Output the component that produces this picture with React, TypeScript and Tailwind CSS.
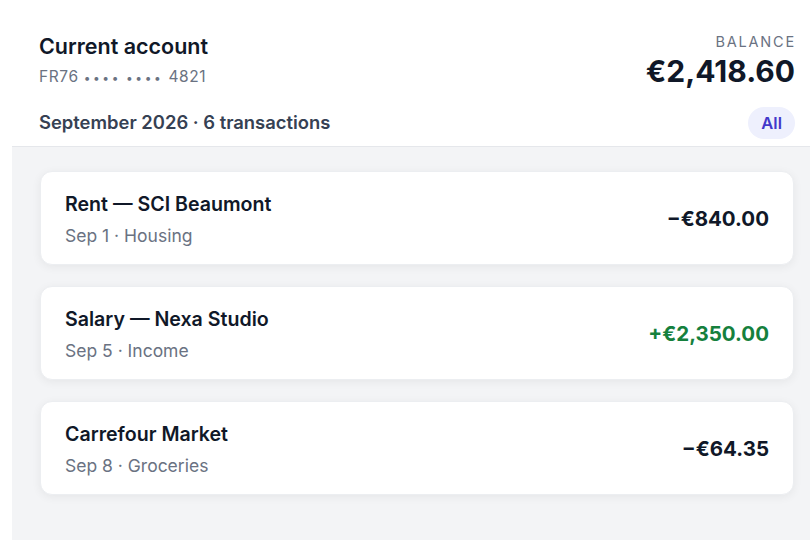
import React from "react";

const txs = [
  { title: "Rent — SCI Beaumont", sub: "Sep 1 · Housing", amount: "−€840.00", pos: false },
  { title: "Salary — Nexa Studio", sub: "Sep 5 · Income", amount: "+€2,350.00", pos: true },
  { title: "Carrefour Market", sub: "Sep 8 · Groceries", amount: "−€64.35", pos: false },
];

export default function App() {
  return (
    <div
      className="w-[810px] h-[540px] overflow-hidden bg-white"
      style={{ fontFamily: "Inter, 'Noto Sans', sans-serif" }}
    >
      <div className="ml-3 w-[810px] h-full flex flex-col">
        <div className="px-[27px] pt-8 pb-[7px]">
          <div className="flex justify-between items-start">
            <div className="flex flex-col">
              <div className="text-[21.5px] leading-[28px] font-semibold text-gray-900">
                Current account
              </div>
              <div className="mt-[7px] text-[15.5px] leading-[20px] text-gray-500 tracking-[0.6px]">
                FR76 <span className="text-[12px] tracking-[2.6px]">••••</span>{" "}
                <span className="text-[12px] tracking-[2.6px]">••••</span> 4821
              </div>
            </div>
            <div className="flex flex-col items-end">
              <div className="text-[14.5px] leading-[20px] text-gray-500 tracking-[1.8px] -mr-[1px]">BALANCE</div>
              <div className="mt-[2px] text-[30px] leading-[34px] font-bold text-gray-900">
                €2,418.60
              </div>
            </div>
          </div>
          <div className="mt-[19px] flex justify-between items-center">
            <div className="text-[18.4px] font-semibold text-gray-700">September 2026 · 6 transactions</div>
            <div className="h-8 px-[13px] rounded-full bg-[#eef0fd] text-[#4338ca] text-[16.5px] font-semibold flex items-center">
              All
            </div>
          </div>
        </div>
        <div className="flex-1 bg-[#f3f4f6] border-t border-[#e5e7eb] px-7 pt-6 flex flex-col gap-[21px]">
          {txs.map((t) => (
            <div
              key={t.title}
              className="bg-white rounded-xl border border-[#eceef1] shadow-[0_2px_10px_rgba(0,0,0,0.06)] pl-6 pr-6 pt-[19px] pb-[16px] flex justify-between items-center"
            >
              <div className="flex flex-col gap-[5px]">
                <div className="text-[19.6px] leading-[27px] font-semibold text-gray-900">{t.title}</div>
                <div className="text-[17.5px] leading-[25px] text-gray-500">{t.sub}</div>
              </div>
              <div
                className={
                  "text-[20.5px] font-bold " + (t.pos ? "text-[#15803d]" : "text-gray-900")
                }
              >
                {t.amount}
              </div>
            </div>
          ))}
        </div>
      </div>
    </div>
  );
}
